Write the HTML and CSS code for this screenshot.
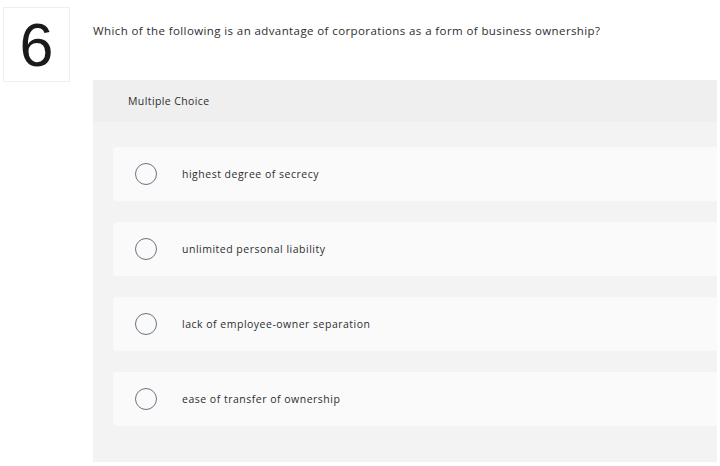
FILE: index.html
```html
<!DOCTYPE html>
<html>
<head>
<meta charset="utf-8">
<link rel="stylesheet" href="styles.css">
</head>
<body>
<div class="page">
  <div class="num">6</div>
  <div class="main">
    <p class="question">Which of the following is an advantage of corporations as a form of business ownership?</p>
    <div class="panel">
      <div class="panel-head">Multiple Choice</div>
      <div class="options">
        <div class="option"><span class="radio"></span><span class="label">highest degree of secrecy</span></div>
        <div class="option"><span class="radio"></span><span class="label">unlimited personal liability</span></div>
        <div class="option"><span class="radio"></span><span class="label">lack of employee-owner separation</span></div>
        <div class="option"><span class="radio"></span><span class="label">ease of transfer of ownership</span></div>
      </div>
    </div>
  </div>
</div>
</body>
</html>
```
FILE: styles.css
```css
html, body {
  margin: 0;
  padding: 0;
  background: #ffffff;
}
body {
  font-family: "Open Sans", Lato, sans-serif;
  color: #333;
  width: 720px;
  height: 466px;
  overflow: hidden;
}
.page {
  display: flex;
  padding: 7px 0 0 3px;
}
.num {
  box-sizing: border-box;
  width: 67px;
  height: 75px;
  border: 1px solid #efefef;
  display: flex;
  align-items: center;
  justify-content: center;
  font-family: "Liberation Sans", Arial, sans-serif;
  font-size: 61px;
  font-weight: 300;
  color: #1a1a1a;
  flex: none;
}
.main {
  margin-left: 23px;
  flex: 1;
}
.question {
  margin: 16px 0 0 0;
  font-size: 11.5px;
  line-height: 15px;
  letter-spacing: 0.4px;
  color: #2e2e2e;
}
.panel {
  margin-top: 42px;
  width: 624px;
  height: 382px;
  background: #f3f3f3;
}
.panel-head {
  height: 42px;
  box-sizing: border-box;
  padding-left: 35px;
  display: flex;
  align-items: center;
  background: #efefef;
  font-size: 10.5px;
  letter-spacing: 0.4px;
  color: #2e2e2e;
}
.options {
  display: flex;
  flex-direction: column;
  gap: 21px;
  padding: 25px 0 0 20px;
}
.option {
  height: 54px;
  background: #fafafa;
  border-radius: 4px 0 0 4px;
  display: flex;
  align-items: center;
  padding-left: 22px;
}
.radio {
  width: 20px;
  height: 20px;
  border: 1.5px solid #687384;
  border-radius: 50%;
  flex: none;
}
.label {
  margin-left: 25px;
  font-size: 10.5px;
  letter-spacing: 0.5px;
  color: #2e2e2e;
}
```
